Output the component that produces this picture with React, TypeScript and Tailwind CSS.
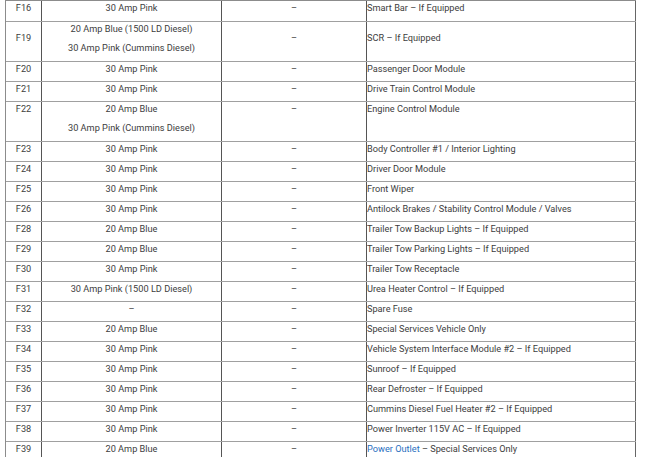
type Row = {
  fuse: string;
  amps: string[];
  desc: string;
  link?: string;
  center?: boolean;
};

const rows: Row[] = [
  { fuse: 'F16', amps: ['30 Amp Pink'], desc: 'Smart Bar – If Equipped' },
  {
    fuse: 'F19',
    amps: ['20 Amp Blue (1500 LD Diesel)', '30 Amp Pink (Cummins Diesel)'],
    desc: 'SCR – If Equipped',
    center: true,
  },
  { fuse: 'F20', amps: ['30 Amp Pink'], desc: 'Passenger Door Module' },
  { fuse: 'F21', amps: ['30 Amp Pink'], desc: 'Drive Train Control Module' },
  {
    fuse: 'F22',
    amps: ['20 Amp Blue', '30 Amp Pink (Cummins Diesel)'],
    desc: 'Engine Control Module',
  },
  { fuse: 'F23', amps: ['30 Amp Pink'], desc: 'Body Controller #1 / Interior Lighting' },
  { fuse: 'F24', amps: ['30 Amp Pink'], desc: 'Driver Door Module' },
  { fuse: 'F25', amps: ['30 Amp Pink'], desc: 'Front Wiper' },
  { fuse: 'F26', amps: ['30 Amp Pink'], desc: 'Antilock Brakes / Stability Control Module / Valves' },
  { fuse: 'F28', amps: ['20 Amp Blue'], desc: 'Trailer Tow Backup Lights – If Equipped' },
  { fuse: 'F29', amps: ['20 Amp Blue'], desc: 'Trailer Tow Parking Lights – If Equipped' },
  { fuse: 'F30', amps: ['30 Amp Pink'], desc: 'Trailer Tow Receptacle' },
  { fuse: 'F31', amps: ['30 Amp Pink (1500 LD Diesel)'], desc: 'Urea Heater Control – If Equipped' },
  { fuse: 'F32', amps: ['–'], desc: 'Spare Fuse' },
  { fuse: 'F33', amps: ['20 Amp Blue'], desc: 'Special Services Vehicle Only' },
  { fuse: 'F34', amps: ['30 Amp Pink'], desc: 'Vehicle System Interface Module #2 – If Equipped' },
  { fuse: 'F35', amps: ['30 Amp Pink'], desc: 'Sunroof – If Equipped' },
  { fuse: 'F36', amps: ['30 Amp Pink'], desc: 'Rear Defroster – If Equipped' },
  { fuse: 'F37', amps: ['30 Amp Pink'], desc: 'Cummins Diesel Fuel Heater #2 – If Equipped' },
  { fuse: 'F38', amps: ['30 Amp Pink'], desc: 'Power Inverter 115V AC – If Equipped' },
  { fuse: 'F39', amps: ['20 Amp Blue'], desc: ' – Special Services Only', link: 'Power Outlet' },
];

export default function App() {
  return (
    <div className="min-h-screen bg-white overflow-hidden text-[9.2px] leading-[13px] text-[#3d3d3d] font-['Roboto',sans-serif]">
      <div className="ml-[5px] w-[631px] border-t border-l border-[#8c8c8c]">
        {rows.map((r, i) => {
          const tall = r.amps.length > 1;
          const h = i === 0 ? 'h-[21px]' : tall ? 'h-[40px]' : 'h-[20px]';
          const pad = r.center ? 'pt-[9px]' : '';
          return (
            <div key={r.fuse} className={`flex border-b border-[#a0a0a0] ${h}`}>
              <div className={`w-[36px] shrink-0 border-r border-[#555] text-center ${pad}`}>
                {r.fuse}
              </div>
              <div className="w-[180px] shrink-0 border-r border-[#555] text-center flex flex-col gap-[6px]">
                {r.amps.map((a) => (
                  <span key={a}>{a}</span>
                ))}
              </div>
              <div className={`w-[145px] shrink-0 border-r border-[#555] text-center ${pad}`}>–</div>
              <div className={`w-[269px] shrink-0 border-r border-[#666] whitespace-nowrap ${pad}`}>
                {r.link && <span className="text-[#2a6fc0]">{r.link}</span>}
                {r.desc}
              </div>
            </div>
          );
        })}
      </div>
    </div>
  );
}
